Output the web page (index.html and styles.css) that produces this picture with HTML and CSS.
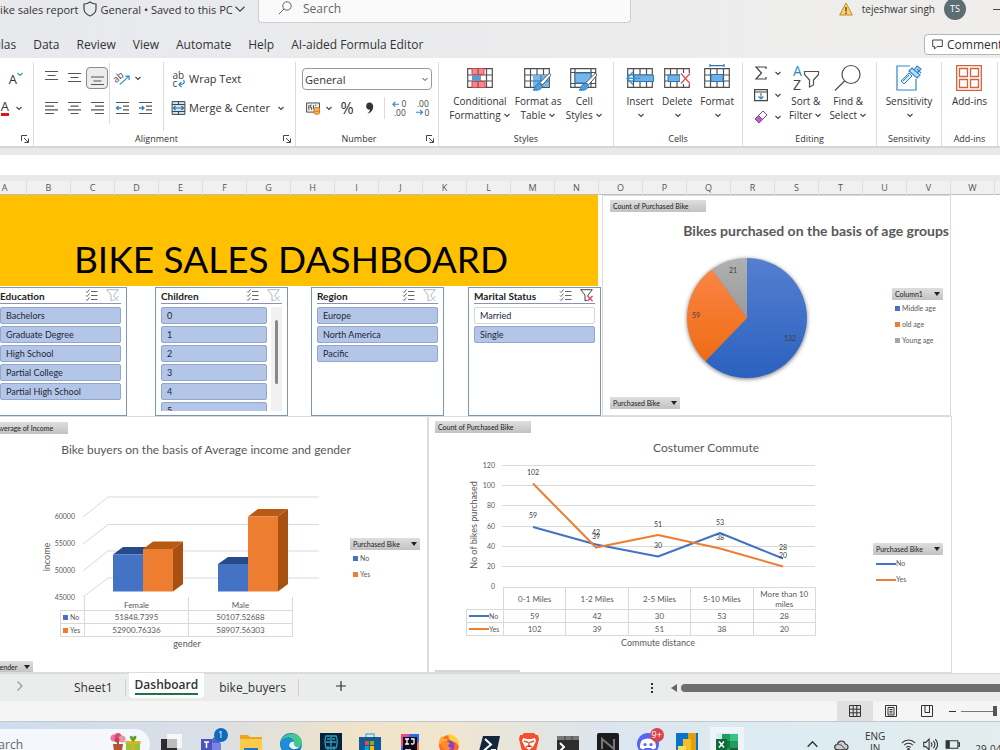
FILE: index.html
```html
<!DOCTYPE html>
<html lang="en">
<head>
    <meta charset="UTF-8">
    <title>Bike sales report</title>
    <link rel="stylesheet" href="styles.css">
</head>
<body>
    <!-- Shared icons -->
    <svg class="sprite" width="0" height="0">
        <symbol id="chevron" viewBox="0 0 8 8"><path d="M1.500 3L4 5.500 6.500 3" fill="none" stroke="#444" stroke-width="1.100"/></symbol>
        <symbol id="launcher" viewBox="0 0 8 8"><path d="M.5 6V.5H6M3 3l4 4M7.500 3.500v4h-4" fill="none" stroke="#444"/></symbol>
        <symbol id="multi" viewBox="0 0 13 13"><path d="M1 2.500l1 1 2.500-3M1 6.500l1 1 2.500-3M1 10.500l1 1 2.500-3M6 2.500h6.500M6 6.500h6.500M6 10.500h6.500" fill="none" stroke="#666"/></symbol>
        <symbol id="funnel" viewBox="0 0 13 13"><path d="M.7.7h11.600L8 6v1M.7.7L5 6v6l2-1" fill="none" stroke="currentColor"/></symbol>
        <symbol id="cells" viewBox="0 0 26 20"><path d="M.7.7h24.600v18.600H.7zM.7 7h24.600M.7 13h24.600M6.500.7v18.600M13 .7v18.600M19.500.7v18.600" fill="#fff" stroke="#505050" stroke-width="1.200"/></symbol>
        <symbol id="brush" viewBox="0 0 20 18"><path d="M18.500.8c1 .4.800 1.500 0 2.500L11 12 8.500 9.500 16.500 1.500c.6-.6 1.400-1 2-.7z" fill="#fff" stroke="#505050"/><path d="M8 10l3 3c-.5 3-4 5-9.500 4C4 15.500 3.500 11 8 10z" fill="#4f9fdc" stroke="#2b78b8"/></symbol>
    </svg>

    <header class="title-bar">
        <div class="doc-info">
            <span>Bike sales report</span>
            <svg class="shield" viewBox="0 0 14 16"><path d="M7 1c2 1.500 4 2 6 2v5c0 3.500-2.500 5.500-6 7-3.500-1.500-6-3.500-6-7V3c2 0 4-.5 6-2z" fill="none" stroke="#444" stroke-width="1.200"/></svg>
            <span>General • Saved to this PC</span>
            <svg class="chev-lg" viewBox="0 0 8 8"><path d="M1 2.500l3 3 3-3" fill="none" stroke="#444" stroke-width=".8"/></svg>
        </div>
        <label class="search-box">
            <svg viewBox="0 0 14 14"><circle cx="9" cy="5" r="4.200" fill="none" stroke="#666"/><path d="M6 8L.8 13.200" stroke="#666"/></svg>
            <input type="search" placeholder="Search" aria-label="Search">
        </label>
        <div class="account">
            <svg class="warn" viewBox="0 0 14 14"><path d="M7 1l6.300 12H.7z" fill="#fbd36a" stroke="#c8872a"/><path d="M7 5v4.500M7 10.500V12" stroke="#4a3a10" stroke-width="1.300"/></svg>
            <span>tejeshwar singh</span>
            <span class="avatar">TS</span>
            <span class="minimize"></span>
        </div>
    </header>

    <div class="menu-bar">
        <nav class="menu">
            <a href="#">Formulas</a>
            <a href="#">Data</a>
            <a href="#">Review</a>
            <a href="#">View</a>
            <a href="#">Automate</a>
            <a href="#">Help</a>
            <a href="#">AI-aided Formula Editor</a>
        </nav>
        <button class="comments-btn">
            <svg viewBox="0 0 11 11"><path d="M.7 1h9.600v6.500H5L2.500 10V7.500H.7z" fill="none" stroke="#444"/></svg>
            Comments
        </button>
    </div>

    <div class="ribbon">
        <section class="group font-group">
            <div class="group-body font-tools">
                <button class="tool" aria-label="Decrease font size"><span class="letter">A</span><svg class="chev-sup" viewBox="0 0 6 5"><path d="M.5 1L3 3.500 5.500 1" fill="none" stroke="#2b9aa8" stroke-width="1.200"/></svg></button>
                <button class="tool" aria-label="Font color"><span class="letter font-color">A</span><svg class="chev" viewBox="0 0 8 8"><use href="#chevron"/></svg></button>
            </div>
            <div class="group-label"><svg class="launcher"><use href="#launcher"/></svg></div>
        </section>

        <section class="group align-group">
            <div class="group-body">
                <div class="align-grid">
                    <button class="tool" aria-label="Top align"><svg viewBox="0 0 14 16"><path d="M.5 1.500h13M3 5.500h8M.5 9.500h13" stroke="#555" stroke-width="1.200"/></svg></button>
                    <button class="tool" aria-label="Middle align"><svg viewBox="0 0 14 16"><path d="M.5 3.500h13M3 7.500h8M.5 11.500h13" stroke="#555" stroke-width="1.200"/></svg></button>
                    <button class="tool active" aria-label="Bottom align"><svg viewBox="0 0 14 16"><path d="M.5 7h13M3 11h8M.5 14.500h13" stroke="#555" stroke-width="1.200"/></svg></button>
                    <i class="rule"></i>
                    <button class="tool" aria-label="Orientation"><svg viewBox="0 0 16 16"><text x="-2" y="11" font-size="10" fill="#444" transform="rotate(-40 3 8)">ab</text><path d="M5 15L15 6M11 6h4v4" fill="none" stroke="#2e86c8" stroke-width="1.200"/></svg></button>
                    <button class="tool narrow" aria-label="Orientation options"><svg class="chev" viewBox="0 0 8 8"><use href="#chevron"/></svg></button>
                    <button class="tool" aria-label="Align left"><svg viewBox="0 0 14 16"><path d="M.5 2.500h13M.5 6.200h9M.5 9.800h13M.5 13.500h9" stroke="#555" stroke-width="1.200"/></svg></button>
                    <button class="tool" aria-label="Center"><svg viewBox="0 0 14 16"><path d="M.5 2.500h13M3 6.200h8M.5 9.800h13M3 13.500h8" stroke="#555" stroke-width="1.200"/></svg></button>
                    <button class="tool" aria-label="Align right"><svg viewBox="0 0 14 16"><path d="M.5 2.500h13M4.500 6.200h9M.5 9.800h13M4.500 13.500h9" stroke="#555" stroke-width="1.200"/></svg></button>
                    <i class="rule"></i>
                    <button class="tool" aria-label="Decrease indent"><svg viewBox="0 0 14 16"><path d="M.5 2.500h13M7.500 6.200h6M7.500 9.800h6M.5 13.500h13" stroke="#555" stroke-width="1.200"/><path d="M6 8H1M3 6L1 8l2 2" fill="none" stroke="#2e86c8" stroke-width="1.300"/></svg></button>
                    <button class="tool" aria-label="Increase indent"><svg viewBox="0 0 14 16"><path d="M.5 2.500h13M7.500 6.200h6M7.500 9.800h6M.5 13.500h13" stroke="#555" stroke-width="1.200"/><path d="M.5 8h5M3.500 6l2 2-2 2" fill="none" stroke="#2e86c8" stroke-width="1.300"/></svg></button>
                </div>
                <div class="wrap-tools">
                    <button class="tool"><svg viewBox="0 0 14 16"><text x="1" y="8" font-size="10" fill="#444">ab</text><text x="1" y="16" font-size="10" fill="#444">c</text><path d="M12 9c2 3 0 4.500-4.500 4.500M10 11l-2.500 2.500L10 16" fill="none" stroke="#2e86c8" stroke-width="1.200"/></svg>Wrap Text</button>
                    <button class="tool"><svg viewBox="0 0 14 16"><path d="M.6 1.600h12.800v12.800H.6zM.6 4.500h12.800M.6 11.500h12.800M7 1.600v3M7 11.500v3" fill="#cfe6f7" stroke="#444"/><path d="M2 8h10M4 6L2 8l2 2M10 6l2 2-2 2" fill="none" stroke="#1d73b8" stroke-width="1.200"/></svg>Merge &amp; Center<svg class="chev" viewBox="0 0 8 8"><use href="#chevron"/></svg></button>
                </div>
            </div>
            <div class="group-label">Alignment<svg class="launcher"><use href="#launcher"/></svg></div>
        </section>

        <section class="group number-group">
            <div class="group-body number-tools">
                <select aria-label="Number format"><option>General</option></select>
                <div class="number-row">
                    <button class="tool" aria-label="Accounting format"><svg viewBox="0 0 16 16"><path d="M.6 2.600h13.800v9.800H.6z" fill="#eee" stroke="#444"/><path d="M3 5v5M6 5H4.500v2.500H6V10M8 5v4M11 5H9.500" fill="none" stroke="#444"/><path d="M8.500 8.500c0-1.500 6-1.500 6 0v5c0 1.500-6 1.500-6 0z" fill="#f6b352" stroke="#d07b1a"/><path d="M8.500 11c1 1 5 1 6 0" fill="none" stroke="#d07b1a"/></svg><svg class="chev" viewBox="0 0 8 8"><use href="#chevron"/></svg></button>
                    <button class="tool percent">%</button>
                    <button class="tool" aria-label="Comma style"><svg viewBox="0 0 16 16"><path d="M9 2c2.700 0 4 1.900 4 4.400 0 3.700-2.300 6.800-6.200 7.800 1.900-1.700 2.700-3 2.800-4.500C7.300 10 5.500 8.400 5.500 6 5.500 3.600 7 2 9 2z" fill="#333"/></svg></button>
                    <i class="rule"></i>
                    <button class="tool" aria-label="Increase decimal"><svg viewBox="0 0 16 16"><path d="M1 4h6.500M3.500 1.500L1 4l2.500 2.500" fill="none" stroke="#2e86c8" stroke-width="1.200"/><text x="10" y="7" font-size="9" fill="#444">0</text><text x="2" y="16" font-size="9" fill="#444">.00</text></svg></button>
                    <button class="tool" aria-label="Decrease decimal"><svg viewBox="0 0 16 16"><path d="M1 12.500h7M5.500 10L8 12.500 5.500 15" fill="none" stroke="#2e86c8" stroke-width="1.200"/><text x="2" y="7" font-size="9" fill="#444">.00</text><text x="10" y="16" font-size="9" fill="#444">0</text></svg></button>
                </div>
            </div>
            <div class="group-label">Number<svg class="launcher"><use href="#launcher"/></svg></div>
        </section>

        <section class="group styles-group">
            <div class="group-body big-tools">
                <button class="big"><svg viewBox="0 0 26 26"><use href="#cells" y="3" width="26" height="20"/><path d="M5 3.500h12v6H5zM5 16.500h13v6H5z" fill="#f9858b" stroke="#d8434d"/><path d="M5 10h8v6H5z" fill="#5b9bd5"/><path d="M11 3v6M11 17v6M19.500 3v20" stroke="#505050"/></svg><span>Conditional<br>Formatting<svg class="chev" viewBox="0 0 8 8"><use href="#chevron"/></svg></span></button>
                <button class="big"><svg viewBox="0 0 28 26"><use href="#cells" y="3" width="26" height="20"/><path d="M9 10h16v12H9z" fill="#76b6ea"/><path d="M9 16h16M17 10v12" stroke="#2b78b8"/><use href="#brush" x="7" y="8" width="21" height="18"/></svg><span>Format as<br>Table<svg class="chev" viewBox="0 0 8 8"><use href="#chevron"/></svg></span></button>
                <button class="big"><svg viewBox="0 0 28 26"><path d="M.7 3.700h25v18.600H.7zM.7 7.500h25M.7 18.500h25M5 3.700v18.600M21 3.700v18.600" fill="#fff" stroke="#505050" stroke-width="1.200"/><path d="M5 8h16v10H5z" fill="#76b6ea" stroke="#2b78b8"/><use href="#brush" x="7" y="8" width="21" height="18"/></svg><span>Cell<br>Styles<svg class="chev" viewBox="0 0 8 8"><use href="#chevron"/></svg></span></button>
            </div>
            <div class="group-label">Styles</div>
        </section>

        <section class="group cells-group">
            <div class="group-body cells-tools">
                <button class="big"><svg viewBox="0 0 28 26"><use href="#cells" x="1" y="3" width="26" height="20"/><path d="M8 10h19.500v6.500H8z" fill="#6fb0e6" stroke="#2b78b8"/><path d="M14 13.200H1M7 7l-6 6.200 6 6.200" fill="none" stroke="#2e9be0" stroke-width="1.500"/></svg><span>Insert<br><svg class="chev" viewBox="0 0 8 8"><use href="#chevron"/></svg></span></button>
                <button class="big"><svg viewBox="0 0 28 26"><use href="#cells" x="1" y="3" width="26" height="20"/><path d="M5 10h12v6.500H5z" fill="#6fb0e6" stroke="#2b78b8"/><path d="M17 8h11v11H17z" fill="#fff"/><path d="M18 8.500l9 10M27 8.500l-9 10" stroke="#e0505a" stroke-width="1.300"/></svg><span>Delete<br><svg class="chev" viewBox="0 0 8 8"><use href="#chevron"/></svg></span></button>
                <button class="big"><svg viewBox="0 0 28 26"><use href="#cells" x="1" y="3" width="26" height="20"/><path d="M8 9.500h12v7H8z" fill="#6fb0e6" stroke="#2b78b8"/><path d="M7 .6h14M7-1v3M21-1v3" stroke="#2b78b8" stroke-width="1.200"/></svg><span>Format<br><svg class="chev" viewBox="0 0 8 8"><use href="#chevron"/></svg></span></button>
            </div>
            <div class="group-label">Cells</div>
        </section>

        <section class="group editing-group">
            <div class="group-body editing-tools">
                <div class="small-stack">
                    <button class="tool" aria-label="AutoSum"><svg viewBox="0 0 14 14"><path d="M12 3V1H2l5.500 6L2 13h10v-2" fill="none" stroke="#444" stroke-width="1.200"/></svg><svg class="chev" viewBox="0 0 8 8"><use href="#chevron"/></svg></button>
                    <button class="tool" aria-label="Fill"><svg viewBox="0 0 14 14"><path d="M.6 1.600h12.800v11H.6zM.6 4h12.800" fill="none" stroke="#444" stroke-width="1.200"/><path d="M7 5v6M4.500 8.500L7 11l2.500-2.500" fill="none" stroke="#2e86c8" stroke-width="1.200"/></svg><svg class="chev" viewBox="0 0 8 8"><use href="#chevron"/></svg></button>
                    <button class="tool" aria-label="Clear"><svg viewBox="0 0 14 14"><path d="M9 1l4 4-8 8-4-4z" fill="#fff" stroke="#8a3fa0"/><path d="M4.500 5.500l4 4L5 13 1 9z" fill="#b565c7" stroke="#8a3fa0"/></svg><svg class="chev" viewBox="0 0 8 8"><use href="#chevron"/></svg></button>
                </div>
                <button class="big"><svg viewBox="0 0 26 26"><text x="0" y="11" font-size="14" fill="#2e86c8">A</text><text x="0" y="25" font-size="14" fill="#444">Z</text><path d="M11.500 6.500h14v3L20.500 15v5l-4 2v-7L11.500 9.500z" fill="#fff" stroke="#505050" stroke-width="1.200"/></svg><span>Sort &amp;<br>Filter<svg class="chev" viewBox="0 0 8 8"><use href="#chevron"/></svg></span></button>
                <button class="big"><svg viewBox="0 0 26 26"><circle cx="16" cy="9.500" r="9" fill="none" stroke="#505050" stroke-width="1.200"/><path d="M9.500 16L0 25.500" stroke="#505050" stroke-width="1.200"/></svg><span>Find &amp;<br>Select<svg class="chev" viewBox="0 0 8 8"><use href="#chevron"/></svg></span></button>
            </div>
            <div class="group-label">Editing</div>
        </section>

        <section class="group sensitivity-group">
            <div class="group-body big-tools">
                <button class="big"><svg viewBox="0 0 26 26"><path d="M14 1H1v24h19V14" fill="#fff" stroke="#2e86c8" stroke-width="1.200"/><path d="M5 16l8-8 3 3-8 8zM7 16l6-6" fill="#d6ecfa" stroke="#2e86c8"/><path d="M13 6l8 7 3-3-8-7zM18 5l3-4 4 3-4 4M21 4l4 4" fill="#bfe0f6" stroke="#2e86c8" stroke-width="1.200"/></svg><span>Sensitivity<br><svg class="chev" viewBox="0 0 8 8"><use href="#chevron"/></svg></span></button>
            </div>
            <div class="group-label">Sensitivity</div>
        </section>

        <section class="group addins-group">
            <div class="group-body big-tools">
                <button class="big"><svg viewBox="0 0 26 26"><path d="M.7.7h24.600v24.600H.7zM3.500 3.500h8v8h-8zM14.500 3.500h8v8h-8zM3.500 14.500h8v8h-8zM14.500 14.500h8v8h-8z" fill="none" stroke="#d3613a" stroke-width="1.300"/></svg><span>Add-ins</span></button>
            </div>
            <div class="group-label">Add-ins</div>
        </section>
    </div>

    <div class="formula-bar"></div>

    <div class="column-heads">
        <span>A</span><span>B</span><span>C</span><span>D</span><span>E</span><span>F</span><span>G</span><span>H</span><span>I</span><span>J</span><span>K</span><span>L</span><span>M</span><span>N</span><span>O</span><span>P</span><span>Q</span><span>R</span><span>S</span><span>T</span><span>U</span><span>V</span><span>W</span>
    </div>

    <main class="sheet">
        <div class="sheet-row">
            <div class="left-panel">
                <h1 class="banner">BIKE SALES DASHBOARD</h1>
                <div class="slicers">
                    <section class="slicer">
                        <header><h2>Education</h2><svg><use href="#multi"/></svg><svg class="clear"><use href="#funnel"/><path d="M7.500 7l5 5M12.500 7l-5 5" stroke="#b5b5b5"/></svg></header>
                        <div class="slicer-items">
                            <button>Bachelors</button>
                            <button>Graduate Degree</button>
                            <button>High School</button>
                            <button>Partial College</button>
                            <button>Partial High School</button>
                        </div>
                    </section>
                    <section class="slicer">
                        <header><h2>Children</h2><svg><use href="#multi"/></svg><svg class="clear"><use href="#funnel"/><path d="M7.500 7l5 5M12.500 7l-5 5" stroke="#b5b5b5"/></svg></header>
                        <div class="slicer-scroll">
                            <div class="slicer-items">
                                <button>0</button>
                                <button>1</button>
                                <button>2</button>
                                <button>3</button>
                                <button>4</button>
                                <button>5</button>
                            </div>
                            <div class="track"><i class="thumb"></i></div>
                        </div>
                    </section>
                    <section class="slicer">
                        <header><h2>Region</h2><svg><use href="#multi"/></svg><svg class="clear"><use href="#funnel"/><path d="M7.500 7l5 5M12.500 7l-5 5" stroke="#b5b5b5"/></svg></header>
                        <div class="slicer-items">
                            <button>Europe</button>
                            <button>North America</button>
                            <button>Pacific</button>
                        </div>
                    </section>
                    <section class="slicer">
                        <header><h2>Marital Status</h2><svg><use href="#multi"/></svg><svg class="clear on"><use href="#funnel"/><path d="M7.500 7l5 5M12.500 7l-5 5" stroke="#e0405a" stroke-width="1.300"/></svg></header>
                        <div class="slicer-items">
                            <button class="off">Married</button>
                            <button>Single</button>
                        </div>
                    </section>
                </div>
            </div>

            <section class="chart pie-chart">
                <button class="field wide">Count of Purchased Bike</button>
                <h2>Bikes purchased on the basis of age groups</h2>
                <div class="pie-body">
                    <svg class="pie" viewBox="0 0 124 124" role="img" aria-label="Pie chart">
                        <defs>
                            <linearGradient id="pieBlue" x1="0" y1="0" x2="0" y2="1"><stop offset="0" stop-color="#557fd0"/><stop offset="1" stop-color="#2a62bf"/></linearGradient>
                            <linearGradient id="pieOrange" x1="0" y1="0" x2="0" y2="1"><stop offset="0" stop-color="#fb8547"/><stop offset="1" stop-color="#ee6c12"/></linearGradient>
                            <linearGradient id="pieGrey" x1="0" y1="0" x2="0" y2="1"><stop offset="0" stop-color="#b0b0b0"/><stop offset="1" stop-color="#9a9a9a"/></linearGradient>
                        </defs>
                        <circle class="pie-shadow" cx="62" cy="63" r="60"/>
                        <path d="M62 62V2A60 60 0 1 1 20.300 105.200z" fill="url(#pieBlue)"/>
                        <path d="M62 62L20.300 105.200A60 60 0 0 1 27 13.300z" fill="url(#pieOrange)"/>
                        <path d="M62 62L27 13.300A60 60 0 0 1 62 2z" fill="url(#pieGrey)"/>
                        <text x="48" y="17">21</text>
                        <text x="11" y="62">59</text>
                        <text x="105" y="85">132</text>
                    </svg>
                    <div class="legend">
                        <button class="field short">Column1<i class="arrow"></i></button>
                        <span class="key blue">Middle age</span>
                        <span class="key orange">old age</span>
                        <span class="key grey">Young age</span>
                    </div>
                </div>
                <button class="field">Purchased Bike<i class="arrow"></i></button>
            </section>
        </div>

        <div class="sheet-row">
            <section class="chart income-chart">
                <button class="field wide cut">Average of Income</button>
                <h2>Bike buyers on the basis of Average income and gender</h2>
                <div class="chart-body">
                    <div class="plot-area">
                        <svg class="income-plot" viewBox="40 490 280 107" role="img" aria-label="Average income by gender">
                            <path class="grid" d="M83 517l25-20h211M83 544l25-19.500h211M83 571l25-20h211M83 597l25-19h211"/>
                            <g class="ticks">
                                <text x="75" y="519">60000</text>
                                <text x="75" y="546">55000</text>
                                <text x="75" y="573">50000</text>
                                <text x="75" y="600">45000</text>
                            </g>
                            <text class="axis" x="0" y="0" transform="translate(50 557) rotate(-90)">income</text>
                            <path d="M113 554.500l10-7.500h30l-10 7.500z" fill="#264a8a"/>
                            <path d="M113 554.500h30v37h-30z" fill="#4472c4"/>
                            <path d="M143 549l10-7.500h30L173 549z" fill="#b85a14"/>
                            <path d="M173 549l10-7.500V584l-10 7.500z" fill="#a8500f"/>
                            <path d="M143 549h30v42.500h-30z" fill="#ed7d31"/>
                            <path d="M218 564l10-7h30l-10 7z" fill="#264a8a"/>
                            <path d="M218 564h30v27.500h-30z" fill="#4472c4"/>
                            <path d="M248 516.500l10-7.500h30l-10 7.500z" fill="#b85a14"/>
                            <path d="M278 516.500l10-7.500v75l-10 7.500z" fill="#a8500f"/>
                            <path d="M248 516.500h30v75h-30z" fill="#ed7d31"/>
                        </svg>
                        <table class="income-table">
                            <thead>
                                <tr><td></td><th>Female</th><th>Male</th></tr>
                            </thead>
                            <tbody>
                                <tr><th><span class="key blue">No</span></th><td>51848.7395</td><td>50107.52688</td></tr>
                                <tr><th><span class="key orange">Yes</span></th><td>52900.76336</td><td>58907.56303</td></tr>
                            </tbody>
                        </table>
                        <p class="axis-title">gender</p>
                    </div>
                    <div class="legend">
                        <button class="field">Purchased Bike<i class="arrow"></i></button>
                        <span class="key blue">No</span>
                        <span class="key orange">Yes</span>
                    </div>
                </div>
                <button class="field short cut">gender<i class="arrow"></i></button>
            </section>

            <section class="chart commute-chart">
                <button class="field wide">Count of Purchased Bike</button>
                <h2>Costumer Commute</h2>
                <div class="chart-body">
                    <div class="plot-area">
                        <svg class="commute-plot" viewBox="466 458 350 129" role="img" aria-label="Bikes purchased by commute distance">
                            <path class="grid" d="M502 465.500h313M502 485.500h313M502 505.500h313M502 526.500h313M502 546.500h313M502 566.500h313"/>
                            <g class="ticks">
                                <text x="495" y="468">120</text>
                                <text x="495" y="488">100</text>
                                <text x="495" y="508">80</text>
                                <text x="495" y="529">60</text>
                                <text x="495" y="549">40</text>
                                <text x="495" y="569">20</text>
                                <text x="495" y="589">0</text>
                            </g>
                            <text class="axis" x="0" y="0" transform="translate(477 525) rotate(-90)">No of bikes purchased</text>
                            <path class="line blue-line" d="M533 527l63 17.500 62 12 62-23.500 63 25.500"/>
                            <path class="line orange-line" d="M533 483.500l63 64 62-12.500 62 13.500 63 18"/>
                            <g class="values">
                                <text x="533" y="475">102</text>
                                <text x="533" y="518">59</text>
                                <text x="596" y="535">42</text>
                                <text x="596" y="539">39</text>
                                <text x="658" y="527">51</text>
                                <text x="658" y="548">30</text>
                                <text x="720" y="525">53</text>
                                <text x="720" y="540">38</text>
                                <text x="783" y="550">28</text>
                                <text x="783" y="558">20</text>
                            </g>
                        </svg>
                        <table class="commute-table">
                            <thead>
                                <tr><td></td><th>0-1 Miles</th><th>1-2 Miles</th><th>2-5 Miles</th><th>5-10 Miles</th><th>More than 10 miles</th></tr>
                            </thead>
                            <tbody>
                                <tr><th><span class="dash blue">No</span></th><td>59</td><td>42</td><td>30</td><td>53</td><td>28</td></tr>
                                <tr><th><span class="dash orange">Yes</span></th><td>102</td><td>39</td><td>51</td><td>38</td><td>20</td></tr>
                            </tbody>
                        </table>
                        <p class="axis-title">Commute distance</p>
                    </div>
                    <div class="legend">
                        <button class="field">Purchased Bike<i class="arrow"></i></button>
                        <span class="dash blue">No</span>
                        <span class="dash orange">Yes</span>
                    </div>
                </div>
                <i class="field-edge"></i>
            </section>
        </div>
    </main>

    <div class="sheet-tabs">
        <button class="next" aria-label="Next sheet"><svg viewBox="0 0 8 12"><path d="M1.500 1.500L6 6l-4.500 4.500" fill="none" stroke="#999" stroke-width="1.200"/></svg></button>
        <a href="#" class="tab">Sheet1</a>
        <a href="#" class="tab current"><span>Dashboard</span></a>
        <a href="#" class="tab">bike_buyers</a>
        <button class="add" aria-label="New sheet"><svg viewBox="0 0 12 12"><path d="M6 1v10M1 6h10" stroke="#333" stroke-width="1.200"/></svg></button>
        <svg class="dots" viewBox="0 0 4 12"><path d="M1 1h2v2H1zM1 5h2v2H1zM1 9h2v2H1z" fill="#333"/></svg>
        <div class="scroll"><svg viewBox="0 0 6 8"><path d="M6 0v8L0 4z" fill="#666"/></svg><i></i></div>
    </div>

    <div class="status-bar">
        <button class="view active" aria-label="Normal view"><svg viewBox="0 0 12 12"><path d="M.5.5h11v11H.5zM.5 4.200h11M.5 7.800h11M4.200.5v11M7.800.5v11" fill="none" stroke="#333"/></svg></button>
        <button class="view" aria-label="Page layout"><svg viewBox="0 0 12 12"><path d="M.5.5h11v11H.5zM3 2.500h6v7.500H3zM4.500 4.500h3M4.500 6.300h3M4.500 8h3" fill="none" stroke="#333"/></svg></button>
        <button class="view" aria-label="Page break preview"><svg viewBox="0 0 12 12"><path d="M.5.5h11v11H.5zM4 .5v7h5M8.500.5v7" fill="none" stroke="#333"/></svg></button>
        <div class="zoom"><i class="minus"></i><i class="bar"></i><i class="knob"></i></div>
    </div>

    <footer class="taskbar">
        <label class="task-search">
            <input type="text" placeholder="Search" aria-label="Search Windows">
            <svg viewBox="0 0 32 22"><path d="M9 9v7" stroke="#3f8f45" stroke-width="2"/><circle cx="5" cy="5" r="3.500" fill="#e8799b"/><circle cx="9" cy="3.500" r="3.500" fill="#d9526f"/><circle cx="13" cy="6" r="3.500" fill="#ef91a8"/><circle cx="8" cy="7" r="2.500" fill="#c83e5c"/><path d="M4 11h10l-1.500 10h-7z" fill="#b4552b"/><path d="M17 9h14v12H17z" fill="#8fc63d"/><path d="M22.500 9h3v12h-3zM16.500 8h15v3h-15z" fill="#d8b21f"/><path d="M24 8c-6-6 1-6 0 0 0-6 6-6 0 0" fill="none" stroke="#5e9e2b" stroke-width="1.500"/></svg>
        </label>
        <div class="apps">
            <svg viewBox="0 0 22 22"><path d="M0 6h16v16H0z" fill="#2c2c2c"/><path d="M6 1h15v14H6z" fill="#f7f7f7"/><path d="M6 6h10v9H6z" fill="#bdbdbd"/></svg>
            <span class="badged"><svg viewBox="0 0 22 22"><circle cx="15" cy="8" r="4" fill="#5b5fc7"/><path d="M8 10h12v8c0 4-10 4-12 0z" fill="#7b83eb"/><path d="M0 6h11v11H0z" fill="#4b53bc"/><path d="M3 9h5M5.500 9v6" stroke="#fff" stroke-width="1.500"/></svg><b class="badge blue-badge">1</b></span>
            <svg viewBox="0 0 22 22"><path d="M0 2h8l2 2h12v18H0z" fill="#e7a91b"/><path d="M0 6h22v16H0z" fill="#fbcb4c"/><path d="M4 15h14v7H4z" fill="#2376c4"/></svg>
            <svg viewBox="0 0 22 22"><circle cx="11" cy="11" r="11" fill="#1679c9"/><path d="M1 8C5-3 22-1 22 10c0 5-7 6-9 3 3-5-4-8-12-5z" fill="#45c98a"/><path d="M1 8c6-7 13-3 13 1-4-2-7 2-5 6 2 5 8 5 11 3-5 7-20 6-19-10z" fill="#1b8ed8"/><path d="M14 9c-3-1-5 1-5 4 3 5 8 3 11 1-4 1-7-1-6-5z" fill="#e8f4fb"/></svg>
            <svg viewBox="0 0 22 22"><path d="M0 0h22v22H0z" fill="#05233c"/><path d="M6 3h10c2 4 1 9 0 12H6C5 11 4 7 6 3zM11 3v14M6 9h10M7 6h3M12 6h3M8 13v7M14 13v7" fill="none" stroke="#2da0b8" stroke-width="1.300"/></svg>
            <svg viewBox="0 0 22 22"><path d="M7 4V1h8v3" fill="none" stroke="#54b7e8" stroke-width="1.500"/><path d="M0 4h22v18H0z" fill="#13599a"/><path d="M6 8h4v4H6z" fill="#f25022"/><path d="M11 8h4v4h-4z" fill="#7fba00"/><path d="M6 13h4v4H6z" fill="#00a4ef"/><path d="M11 13h4v4h-4z" fill="#ffb900"/></svg>
            <svg viewBox="0 0 22 22"><path d="M2 1h18v21H2z" fill="#2a6bf0"/><path d="M2 1h9L2 15z" fill="#f0468a"/><path d="M20 8v14H10z" fill="#f5793a"/><path d="M4 4h14v18H4z" fill="#120a18"/><path d="M6 6h4M8 6v5M6 11h4M12 6h3v4c0 1-2 1.500-3 .5M6 17h6" fill="none" stroke="#fff" stroke-width="1.300"/></svg>
            <svg viewBox="0 0 22 22"><circle cx="11" cy="12" r="10" fill="#ff6a24"/><path d="M10 1c7 1 12 6 11 13-2-6-7-5-10-8z" fill="#ffd23c"/><path d="M1 10c0-3 1-5 3-7 1 3 4 3 6 3l-5 7z" fill="#ffab2e"/><circle cx="11" cy="13" r="5.500" fill="#8443c9"/><path d="M3 9c4-2 8-1 9 2-3 0-2 4 2 4-6 5-12 0-11-6z" fill="#ff8a2a"/></svg>
            <svg viewBox="0 0 22 22"><path d="M5 3h17l-4 19H0z" fill="#14263d"/><path d="M7 6l6 5.500-7 6M13 17h5" fill="none" stroke="#fff" stroke-width="2"/></svg>
            <svg viewBox="0 0 22 22"><path d="M6 0h10l2 2h2l1 4-3 12-7 4-7-4L1 6l1-4h2z" fill="#f1502b"/><path d="M5 5l4 1h4l4-1 1 3-3 6-4 3-4-3-3-6z" fill="#fff"/><path d="M6 8l4 1.500M16 8l-4 1.500M11 9v3M8 14l3-1.500 3 1.500" stroke="#f1502b" stroke-width="1.500"/></svg>
            <svg viewBox="0 0 22 22"><path d="M0 3h22v19H0z" fill="#2d2d2d"/><path d="M0 3h22v4H0z" fill="#777"/><path d="M8 3v4M15 3v4" stroke="#444"/><path d="M3 10l4 4-4 4M10 18h6" fill="none" stroke="#fff" stroke-width="2"/></svg>
            <svg viewBox="0 0 22 22"><rect width="22" height="22" rx="2" fill="#1b1c1e"/><path d="M5 16V6l12 10V6" fill="none" stroke="#777" stroke-width="2"/></svg>
            <span class="badged"><svg viewBox="0 0 22 22"><circle cx="11" cy="11" r="11" fill="#5865f2"/><path d="M5 7c4-2 8-2 12 0 2 3 2 6 2 8-2 1-3 2-4 1l-1-1H8l-1 1c-1 1-2 0-4-1 0-3 0-5 2-8z" fill="#fff"/><circle cx="8" cy="11.500" r="1.600" fill="#5865f2"/><circle cx="14" cy="11.500" r="1.600" fill="#5865f2"/></svg><b class="badge red-badge">9+</b></span>
            <svg viewBox="0 0 22 22"><path d="M0 0h22v22H0z" fill="#0a71cc"/><path d="M12 0h8v22h-8z" fill="#e0a010"/><path d="M7 6h8v16H7z" fill="#f2c120"/><path d="M2 13h8v9H2z" fill="#f8dc5a"/></svg>
            <svg class="running" viewBox="0 0 22 22"><path d="M6 1h16v21H6z" fill="#1f9d5c"/><path d="M14 1h8v7h-8z" fill="#35c481"/><path d="M6 8h8v7H6z" fill="#117a43"/><path d="M14 15h8v7h-8z" fill="#17603a"/><path d="M0 6h11v11H0z" fill="#0f6a3a"/><path d="M3 8.500l5 6M8 8.500l-5 6" stroke="#fff" stroke-width="1.500"/></svg>
        </div>
        <div class="tray">
            <svg viewBox="0 0 14 14"><path d="M2.500 9L7 4.500 11.500 9" fill="none" stroke="#333" stroke-width="1.300"/></svg>
            <svg viewBox="0 0 14 14"><path d="M3.500 12C0 12-.5 7.500 3 7c1-4 6.500-4.500 7.500-.5 3.500.5 3.500 5.500 0 5.500z" fill="#ccc" stroke="#333"/><path d="M3 7c2-1 4 0 7.500 4.500" fill="none" stroke="#666"/></svg>
            <span class="lang">ENG<br>IN</span>
            <svg viewBox="0 0 14 14"><path d="M.8 5.500c3.500-3.700 8.900-3.700 12.400 0M2.800 7.700c2.300-2.400 6.100-2.400 8.400 0M4.800 9.800c1.200-1.300 3.200-1.300 4.400 0" fill="none" stroke="#333"/><circle cx="7" cy="11.500" r="1.200" fill="#333"/></svg>
            <svg viewBox="0 0 14 14"><path d="M.7 5h2l3-3v10l-3-3h-2zM7.500 5c1 1.200 1 2.800 0 4M9.500 3.500c2 2.200 2 4.800 0 7M11.500 2c2.500 3 2.500 7 0 10" fill="none" stroke="#333"/></svg>
            <svg viewBox="0 0 14 14"><path d="M1 3.500h11v7H1zM12 5.500h1.500v3H12" fill="none" stroke="#333"/><path d="M1 3.500h3.500v7H1z" fill="#333"/></svg>
            <span class="date">29-04-2023</span>
        </div>
    </footer>
</body>
</html>
```
FILE: styles.css
```css
* {
    margin: 0;
    padding: 0;
    box-sizing: border-box;
}

body {
    display: flex;
    flex-direction: column;
    height: 100vh;
    overflow: hidden;
    font-family: "Open Sans", "Noto Sans", sans-serif;
    font-size: 11px;
    color: #333;
    background: #fff;
}

body > * {
    flex-shrink: 0;
}

button,
input,
select {
    font: inherit;
    color: inherit;
    background: none;
    border: none;
}

a {
    color: inherit;
    text-decoration: none;
}

.sprite {
    position: absolute;
}

.chev {
    width: 8px;
    height: 8px;
}

/* Title bar */
.title-bar {
    display: flex;
    height: 28px;
    background: linear-gradient(90deg, #e7e9ed, #efeeec);
}

.doc-info {
    display: flex;
    align-items: center;
    gap: 4px;
    width: 265px;
    height: 18px;
    margin-left: -7px;
    white-space: nowrap;
}

.shield {
    width: 14px;
    height: 16px;
}

.chev-lg {
    width: 12px;
    height: 12px;
    margin-left: -3px;
}

.search-box {
    display: flex;
    align-items: center;
    gap: 11px;
    flex: 0 1 373px;
    height: 23px;
    padding: 0 19px 6px;
    background: #fafafa;
    border: 1px solid #cfcfd2;
    border-top: none;
    border-radius: 0 0 4px 4px;
}

.search-box svg {
    width: 14px;
    height: 14px;
}

.search-box input {
    flex: 1;
    font-size: 12px;
    outline: none;
}

input::placeholder {
    color: #666;
}

.account {
    display: flex;
    align-items: center;
    justify-content: flex-end;
    gap: 9px;
    flex: 1;
    height: 18px;
    font-size: 10px;
}

.warn {
    width: 14px;
    height: 14px;
}

.avatar {
    width: 22px;
    height: 22px;
    border-radius: 50%;
    background: #5c6e72;
    color: #fff;
    font-size: 9px;
    line-height: 22px;
    text-align: center;
}

.minimize {
    width: 7px;
    margin-left: 18px;
    border-top: 1px solid #444;
}

/* Menu */
.menu-bar {
    display: flex;
    justify-content: space-between;
    height: 30px;
    background: linear-gradient(90deg, #e7e9ed, #efeeec);
}

.menu {
    display: flex;
    align-items: center;
    gap: 17px;
    height: 33px;
    margin-left: -36px;
    font-size: 12px;
}

.comments-btn {
    display: flex;
    align-items: center;
    gap: 4px;
    width: 90px;
    height: 21px;
    margin: 6px -14px 0 0;
    padding-left: 7px;
    background: #fff;
    border: 1px solid #b5b5b5;
    border-radius: 4px;
    font-size: 12px;
}

.comments-btn svg {
    width: 11px;
    height: 11px;
}

/* Ribbon */
.ribbon {
    display: flex;
    height: 90px;
    padding: 4px 0 0;
    background: #fff;
    border-bottom: 2px solid #d6d6d8;
    font-size: 10px;
}

.group {
    display: flex;
    flex-direction: column;
    border-right: 1px solid #dcdcdc;
}

.group-body {
    display: flex;
    height: 69px;
}

.group-label {
    display: flex;
    justify-content: center;
    align-items: center;
    height: 15px;
    padding: 0 4px;
    font-size: 9px;
}

.launcher {
    width: 16px;
    height: 8px;
    margin-left: auto;
    padding-left: 8px;
}

/* keeps the label centred when there is a launcher at the right */
.group-label:has(.launcher)::before {
    content: "";
    margin-right: auto;
}

.tool {
    display: flex;
    align-items: center;
    justify-content: center;
    height: 29px;
    white-space: nowrap;
}

.tool svg:not(.chev):not(.chev-sup) {
    width: 15px;
    height: 16px;
    overflow: visible;
}

.rule {
    width: 1px;
    background: #dcdcdc;
}

.font-group { flex: 0 0 34px; }
.align-group { flex: 0 0 262px; }
.number-group { flex: 0 0 143px; }
.styles-group { flex: 0 0 175px; }
.cells-group { flex: 0 0 129px; }
.editing-group { flex: 0 0 134px; }
.sensitivity-group { flex: 0 0 65px; }
.addins-group { flex: 0 0 56px; }

.font-tools {
    flex-direction: column;
    align-items: flex-end;
    padding: 2px 10px 0 0;
}

.letter {
    font-size: 13px;
}

.font-color {
    line-height: 14px;
    margin-right: 6px;
    border-bottom: 3px solid #e0141c;
}

.chev-sup {
    width: 6px;
    height: 5px;
    margin-bottom: 8px;
}

.align-grid {
    display: grid;
    grid-template-columns: 23px 23px 23px 2px 23px 23px;
    margin: 1px 6px 7px 6px;
}

.tool.active {
    width: 22px;
    height: 22px;
    align-self: center;
    background: #ececec;
    border: 1px solid #8a8a8a;
    border-radius: 4px;
}

.narrow {
    justify-content: flex-start;
}

.wrap-tools {
    padding: 2px 0 0 7px;
    border-left: 1px solid #dcdcdc;
}

.wrap-tools .tool {
    gap: 3px;
    font-size: 11px;
}

.wrap-tools .chev {
    margin-left: 4px;
}

.number-tools {
    flex-direction: column;
    padding: 6px 6px 0;
}

.number-tools select {
    width: 130px;
    height: 22px;
    padding: 0 2px;
    appearance: none;
    border: 1px solid #9a9a9a;
    border-radius: 4px;
    font-size: 11px;
    background: url("data:image/svg+xml,%3Csvg xmlns='http://www.w3.org/2000/svg' viewBox='0 0 8 8'%3E%3Cpath d='M1.500 3L4 5.500 6.500 3' fill='none' stroke='%23444'/%3E%3C/svg%3E") no-repeat right 2px center / 8px 8px;
}

.number-row {
    display: flex;
    align-items: center;
    justify-content: space-between;
    padding: 3px 2px 0 4px;
}

.number-row .tool {
    gap: 4px;
}

.number-row .rule {
    height: 22px;
}

.percent {
    font-size: 16px;
}

.big-tools {
    justify-content: space-evenly;
    padding: 0 6px;
}

.cells-tools {
    justify-content: space-between;
    padding: 0 8px 0 12px;
}

.big {
    display: flex;
    flex-direction: column;
    align-items: center;
    gap: 3px;
    padding-top: 3px;
    line-height: 14px;
    white-space: nowrap;
}

.big > svg {
    width: 28px;
    height: 26px;
    overflow: visible;
}

.big .chev {
    margin-left: 2px;
}

.editing-tools {
    justify-content: space-between;
    padding: 0 9px 0 11px;
}

.small-stack .tool {
    height: 22px;
    gap: 6px;
}

.small-stack .tool svg:not(.chev) {
    width: 14px;
    height: 14px;
}

/* Formula bar and column headings */
.formula-bar {
    height: 33px;
    border-top: 7px solid #e9e9ea;
    border-bottom: 6px solid #e9e9ea;
    background: #fff;
}

.column-heads {
    display: grid;
    grid-template-columns: repeat(23, 44px);
    height: 14px;
    margin-left: -17px;
    background: #f0f0f0;
    border-bottom: 1px solid #bdbdbd;
    font-size: 9px;
    line-height: 14px;
    text-align: center;
    color: #555;
}

.column-heads span {
    border-right: 1px solid #dedede;
}

/* Sheet */
.sheet {
    font-family: Lato, "Open Sans", sans-serif;
    font-size: 8px;
}

.sheet-row {
    display: flex;
}

.left-panel {
    flex: 0 0 602px;
    height: 221px;
}

.banner {
    height: 91px;
    margin-right: 4px;
    padding: 42px 16px 0 0;
    background: #ffc000;
    color: #000;
    font-size: 37px;
    font-weight: normal;
    line-height: 44px;
    text-align: center;
}

.slicers {
    display: grid;
    grid-template-columns: 161px 156px 157px 134px;
    margin: 1px 0 0 -6px;
}

.slicer {
    width: 133px;
    height: 129px;
    padding: 0 5px;
    border: 1px solid #7d97ac;
    background: #fff;
    overflow: hidden;
}

.slicer header {
    display: flex;
    align-items: center;
    gap: 8px;
    height: 16px;
    margin-bottom: 3px;
    padding-right: 2px;
    border-bottom: 1px solid #8a94b0;
}

.slicer h2 {
    flex: 1;
    font-size: 10px;
    line-height: 12px;
    color: #222;
}

.slicer header svg {
    width: 13px;
    height: 13px;
}

.clear {
    color: #b5b5b5;
}

.clear.on {
    color: #444;
}

.slicer-items {
    display: flex;
    flex-direction: column;
    gap: 2px;
    flex: 1;
}

.slicer-items button {
    flex-shrink: 0;
    height: 17px;
    padding-left: 5px;
    background: #b4c6e7;
    border: 1px solid #93a6cb;
    border-radius: 2px;
    color: #22283a;
    font-size: 9px;
    text-align: left;
}

.slicer-items .off {
    background: #fff;
    border-color: #d5d5d5;
}

.slicer-scroll {
    display: flex;
    gap: 4px;
    height: 104px;
    overflow: hidden;
}

.track {
    width: 11px;
    padding: 13px 4px;
    background: #f1f1f1;
}

.thumb {
    display: block;
    width: 3px;
    height: 64px;
    border-radius: 2px;
    background: #888;
}

/* Charts */
.chart {
    background: #fff;
    border: 1px solid #dcdcdc;
    color: #595959;
    overflow: hidden;
}

.chart h2 {
    font-size: 12px;
    font-weight: normal;
    line-height: 16px;
    text-align: center;
}

.field {
    display: flex;
    align-items: center;
    justify-content: space-between;
    width: 70px;
    height: 12px;
    padding: 0 3px;
    background: linear-gradient(#dedede, #c2c2c2);
    font-size: 7px;
    color: #222;
    white-space: nowrap;
}

.field.wide { width: 96px; }
.field.short { width: 51px; }

.arrow {
    border: 3px solid transparent;
    border-top: 4px solid #222;
    border-bottom: none;
}

.chart text {
    font-size: 7px;
    fill: #404040;
    text-anchor: middle;
}

.chart .axis {
    font-size: 9px;
    fill: #595959;
}

.chart .ticks text {
    text-anchor: end;
    fill: #595959;
}

.grid {
    fill: none;
    stroke: #d9d9d9;
}

.legend {
    display: flex;
    flex-direction: column;
    gap: 1px;
}

.legend .key,
.legend .dash {
    height: 15px;
    line-height: 15px;
}

.key,
.dash {
    display: flex;
    align-items: center;
    font-size: 7px;
}

.key {
    gap: 2px;
}

.legend .key {
    margin-left: 3px;
}

.key::before {
    content: "";
    width: 5px;
    height: 5px;
    background: currentColor;
}

.dash::before {
    content: "";
    width: 20px;
    height: 2px;
    background: currentColor;
}

.key.blue::before, .dash.blue::before { background: #4472c4; }
.key.orange::before, .dash.orange::before { background: #ed7d31; }
.key.grey::before { background: #a5a5a5; }

.pie-chart {
    flex: 0 0 349px;
    padding: 4px 7px;
}

.pie-chart h2 {
    margin: 11px -6px 17px 0;
    font-size: 14px;
    font-weight: bold;
    text-align: right;
}

.pie-body {
    display: flex;
    justify-content: space-between;
    align-items: center;
    margin-bottom: 17px;
    padding-left: 75px;
}

.pie {
    width: 124px;
    height: 124px;
    overflow: visible;
}

.pie-shadow {
    fill: #777;
    filter: blur(2px);
}

.income-chart {
    flex: 0 0 428px;
    height: 257px;
    border-left: none;
}

.income-chart .field.wide {
    width: 75px;
}

.income-chart .field.cut {
    margin-left: -7px;
}

.income-chart > .field.short {
    width: 40px;
    margin-top: 10px;
}

.income-chart > .field:first-child {
    margin-top: 5px;
}

.income-chart h2 {
    margin: 8px 15px 32px 0;
}

.chart-body {
    display: flex;
}

.income-plot,
.commute-plot {
    display: block;
    overflow: visible;
}

.income-plot {
    width: 280px;
    height: 107px;
    margin-left: 40px;
}

.income-chart .legend {
    margin: 48px 0 0 30px;
}

.chart table {
    border-collapse: collapse;
    table-layout: fixed;
    font-size: 8px;
    line-height: 10px;
    text-align: center;
}

.chart th {
    font-weight: normal;
}

.chart th,
.chart td {
    height: 13px;
    border: 1px solid #d9d9d9;
}

.chart thead td {
    border-top: none;
    border-left: none;
}

.income-table {
    width: 233px;
    margin-left: 60px;
}

.income-table thead th {
    padding-top: 3px;
    border-top: none;
}

.income-table tr > :first-child {
    width: 24px;
    padding-left: 2px;
}

.axis-title {
    font-size: 9px;
    line-height: 14px;
    text-align: center;
}

.income-chart .axis-title {
    margin-left: 54px;
}

.commute-chart {
    display: flex;
    flex-direction: column;
    flex: 0 0 524px;
    height: 257px;
    padding: 4px 6px 0;
}

.commute-chart h2 {
    margin: 7px 0 2px 32px;
}

.commute-plot {
    width: 350px;
    height: 129px;
}

.commute-chart .plot-area {
    margin-left: 31px;
}

.commute-chart .legend {
    margin: 85px 0 0 57px;
}

.commute-chart .legend .dash {
    margin-left: 3px;
}

.commute-table {
    width: 350px;
}

.commute-table thead th {
    height: 22px;
    padding: 0 6px;
}

.commute-table tr > :first-child {
    width: 37px;
    padding-left: 2px;
}

.commute-chart .axis-title {
    margin-left: 34px;
}

/* top edge of the field button hidden below the fold */
.field-edge {
    width: 85px;
    height: 2px;
    margin-top: auto;
    background: #d6d6d6;
}

.line {
    fill: none;
    stroke-width: 2;
    stroke-linejoin: round;
}

.blue-line { stroke: #4472c4; }
.orange-line { stroke: #ed7d31; }

/* Sheet tabs */
.sheet-tabs {
    display: flex;
    align-items: center;
    height: 28px;
    background: #ebecec;
    border-top: 1px solid #d8d8d8;
    font-size: 12px;
}

.next {
    width: 40px;
    margin-right: 22px;
}

.next svg {
    width: 8px;
    height: 12px;
}

.tab {
    padding: 0 12px;
    border-right: 1px solid #cfcfcf;
}

.tab.current {
    align-self: flex-start;
    margin: -1px 3px 0;
    padding: 3px 6px 3px;
    background: #fff;
    border: none;
    border-radius: 0 0 4px 4px;
    font-weight: 600;
}

.current span {
    display: block;
    border-bottom: 2px solid #217346;
}

.add {
    width: 12px;
    margin-left: 36px;
}

.add svg {
    width: 12px;
    height: 12px;
}

.dots {
    width: 4px;
    height: 12px;
    margin-left: auto;
}

.scroll {
    display: flex;
    align-items: center;
    gap: 4px;
    flex: 0 0 330px;
    margin-left: 17px;
    margin-right: -1px;
}

.scroll svg {
    width: 6px;
    height: 8px;
}

.scroll i {
    flex: 1;
    height: 8px;
    border-radius: 4px 0 0 4px;
    background: #6e6e6e;
}

/* Status bar */
.status-bar {
    display: flex;
    justify-content: flex-end;
    height: 21px;
    background: #f5f5f5;
    border-bottom: 1px solid #c2c8cc;
}

.view {
    display: flex;
    align-items: center;
    justify-content: center;
    width: 36px;
}

.view.active {
    background: #e0e0e0;
}

.view svg {
    width: 12px;
    height: 12px;
}

.zoom {
    display: flex;
    align-items: center;
    width: 55px;
    padding-left: 4px;
}

.minus {
    width: 7px;
    margin-right: 5px;
    border-top: 1px solid #333;
}

.bar {
    flex: 1;
    border-top: 1px solid #777;
}

.knob {
    width: 4px;
    height: 10px;
    margin-right: 3px;
    background: #555;
}

/* Windows taskbar */
.taskbar {
    display: flex;
    align-items: center;
    height: 44px;
    background: linear-gradient(90deg, #cfdced 0%, #d9dfe6 20%, #f0e3c8 36%, #f0e5cf 45%, #dce5ee 60%, #dcecf2 80%, #e3ecee 100%);
}

.taskbar > * {
    flex-shrink: 0;
}

.task-search {
    display: flex;
    align-items: center;
    width: 165px;
    height: 30px;
    margin-left: -15px;
    background: #f4f7fc;
    border-radius: 15px;
}

.task-search input {
    width: 100px;
    font-size: 12px;
}

.task-search svg {
    width: 32px;
    height: 22px;
    margin-left: 24px;
}

.apps {
    display: flex;
    justify-content: space-between;
    width: 577px;
    margin-left: 11px;
}

.apps svg {
    display: block;
    width: 22px;
    height: 22px;
}

.running {
    outline: 6px solid rgba(255, 255, 255, 0.5);
}

.badged {
    position: relative;
}

.badge {
    position: absolute;
    top: -5px;
    right: -5px;
    width: 14px;
    height: 14px;
    border-radius: 50%;
    color: #fff;
    font-size: 9px;
    font-weight: normal;
    line-height: 14px;
    text-align: center;
}

.blue-badge { background: #0f6cbd; }
.red-badge { background: #d9434e; }

.tray {
    display: flex;
    align-items: center;
    margin-left: 67px;
    font-size: 10px;
    white-space: nowrap;
}

.tray svg {
    width: 15px;
    height: 15px;
    margin-right: 7px;
}

.tray svg:nth-child(-n+2) {
    margin-right: 14px;
}

.lang {
    margin: 0 16px 4px 2px;
    line-height: 12px;
    text-align: center;
}

.date {
    margin: 10px 0 0 8px;
}
```
